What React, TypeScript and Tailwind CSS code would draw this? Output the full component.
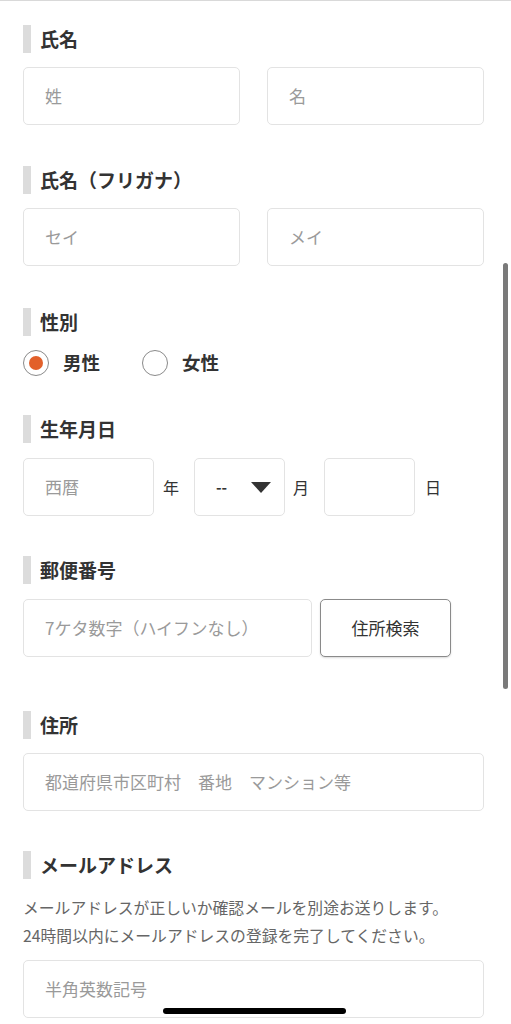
import React from 'react';

const font = { fontFamily: '"Noto Sans CJK JP", "Noto Sans", sans-serif' };

const Label = ({ children, className = '' }: { children: React.ReactNode; className?: string }) => (
    <div className={`flex items-center h-[28px] ${className}`}>
        <span className="w-[8px] h-full bg-[#dcdcdc]" />
        <span className="ml-[9px] text-[19px] font-bold text-[#333] leading-none -translate-y-[1px]">{children}</span>
    </div>
);

const Field = ({ placeholder, className = '' }: { placeholder?: string; className?: string }) => (
    <div
        className={`h-[58px] border border-[#e3e3e3] rounded-[5px] bg-white flex items-center pl-[21px] text-[17px] text-[#9a9a9a] ${className}`}
    >
        {placeholder}
    </div>
);

const Radio = ({ label, checked }: { label: string; checked?: boolean }) => (
    <div className="flex items-center">
        <span className="w-[26px] h-[26px] rounded-full border border-[#8a8a8a] flex items-center justify-center">
            {checked && <span className="w-[14px] h-[14px] rounded-full bg-[#e2602a]" />}
        </span>
        <span className="ml-[14px] text-[18.5px] font-bold text-[#333]">{label}</span>
    </div>
);

export default function App() {
    return (
        <div style={font} className="relative h-[1024px] overflow-hidden bg-white border-t border-[#d9d9d9]">
            <div className="pl-[23px] pr-[27px] pt-[24px]">
                <Label>氏名</Label>
                <div className="grid grid-cols-2 gap-[27px] mt-[14px]">
                    <Field placeholder="姓" />
                    <Field placeholder="名" />
                </div>

                <Label className="mt-[41px]">氏名（フリガナ）</Label>
                <div className="grid grid-cols-2 gap-[27px] mt-[14px]">
                    <Field placeholder="セイ" />
                    <Field placeholder="メイ" />
                </div>

                <Label className="mt-[42px]">性別</Label>
                <div className="flex items-center h-[28px] mt-[13px] gap-[42px]">
                    <Radio label="男性" checked />
                    <Radio label="女性" />
                </div>

                <Label className="mt-[38px]">生年月日</Label>
                <div className="flex items-center mt-[15px] text-[16px] text-[#333]">
                    <Field placeholder="西暦" className="w-[131px]" />
                    <span className="ml-[9px] mr-[15px]">年</span>
                    <div className="w-[91px] h-[58px] border border-[#e3e3e3] rounded-[5px] flex items-center pl-[21px] pr-[13px] justify-between">
                        <span className="text-[15px] font-bold">--</span>
                        <svg width="20" height="11" viewBox="0 0 20 11">
                            <path d="M0 0 H20 L10 11 Z" fill="#333" />
                        </svg>
                    </div>
                    <span className="ml-[8px] mr-[15px]">月</span>
                    <Field className="w-[91px]" />
                    <span className="ml-[10px]">日</span>
                </div>

                <Label className="mt-[40px]">郵便番号</Label>
                <div className="flex mt-[15px] gap-[8px]">
                    <Field placeholder="7ケタ数字（ハイフンなし）" className="w-[289px]" />
                    <button className="w-[131px] h-[58px] border border-[#8a8a8a] rounded-[5px] bg-white text-[17px] text-[#333] shadow-[0_1px_2px_rgba(0,0,0,0.15)]">
                        住所検索
                    </button>
                </div>

                <Label className="mt-[54px]">住所</Label>
                <Field placeholder="都道府県市区町村　番地　マンション等" className="mt-[14px]" />

                <Label className="mt-[40px]">メールアドレス</Label>
                <p className="mt-[15px] text-[15.8px] leading-[28px] text-[#666]">
                    メールアドレスが正しいか確認メールを別途お送りします。
                    <br />
                    24時間以内にメールアドレスの登録を完了してください。
                </p>
                <Field placeholder="半角英数記号" className="mt-[10px]" />
            </div>

            <div className="absolute left-[503px] top-[262px] w-[5px] h-[426px] rounded-full bg-[#7a7a7a]" />
            <div className="absolute left-[163px] bottom-[10px] w-[183px] h-[6px] rounded-full bg-black" />
        </div>
    );
}
